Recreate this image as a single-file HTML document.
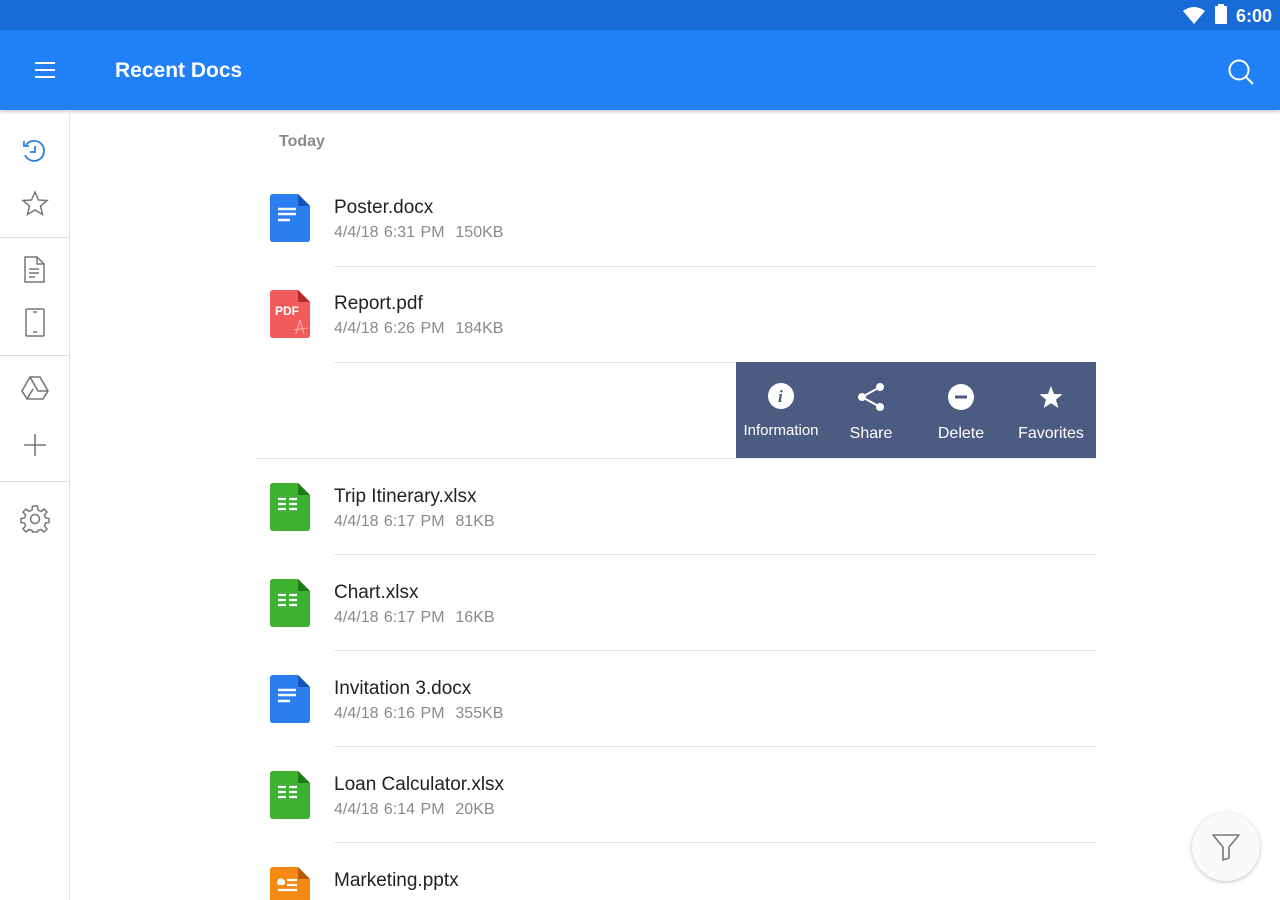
<!DOCTYPE html>
<html><head><meta charset="utf-8"><style>
*{margin:0;padding:0;box-sizing:border-box}
html,body{width:1280px;height:900px;overflow:hidden}
body{background:#fff;font-family:"Liberation Sans",sans-serif;position:relative}
.abs{position:absolute}
.name{position:absolute;left:334px;font-size:19px;color:#222}
.meta{position:absolute;left:334px;font-size:16px;color:#8a8a8a;word-spacing:1px}
.sep{position:absolute;left:334px;width:762px;height:1px;background:#e8e8e8}
.act{position:absolute;top:362px;width:90px;height:96px;color:#fff;text-align:center}
.act span{position:absolute;left:0;right:0;top:60px;font-size:16px}
</style></head><body>
<div class="abs" style="left:0;top:0;width:1280px;height:30px;background:#176bd6"></div>
<svg class="abs" style="left:1183px;top:6px" width="22" height="18" viewBox="0 0 22 18"><path d="M0 5 Q11 -3 22 5 L11 18 Z" fill="#fff"/></svg>
<div class="abs" style="left:1215px;top:6px;width:12px;height:18px;background:#fff;border-radius:1px"></div>
<div class="abs" style="left:1218px;top:4px;width:6px;height:3px;background:#fff"></div>
<div class="abs" style="left:1236px;top:6px;color:#fff;font-size:18px;font-weight:bold">6:00</div>
<div class="abs" style="left:0;top:30px;width:1280px;height:80px;background:#1f80f8;box-shadow:0 2px 3px rgba(0,0,0,.2)"></div>
<svg class="abs" style="left:34px;top:61px" width="22" height="18"><path d="M1 2H21M1 9H21M1 16H21" stroke="#fff" stroke-width="2"/></svg>
<div class="abs" style="left:115px;top:59px;color:#fff;font-size:21px;font-weight:bold">Recent Docs</div>
<svg class="abs" style="left:1226px;top:57px" width="30" height="30"><circle cx="13" cy="13" r="9.5" fill="none" stroke="#fff" stroke-width="2"/><path d="M20 20L27 27" stroke="#fff" stroke-width="2.2"/></svg>
<div class="abs" style="left:69px;top:110px;width:1px;height:790px;background:#e4e4e4"></div>
<div class="abs" style="left:0;top:237px;width:69px;height:1px;background:#ddd"></div>
<div class="abs" style="left:0;top:355px;width:69px;height:1px;background:#ddd"></div>
<div class="abs" style="left:0;top:481px;width:69px;height:1px;background:#ddd"></div>
<svg class="abs" style="left:20px;top:137px" width="30" height="30" fill="none" stroke-width="1.8"><path d="M6 8 A10 10 0 1 1 5 18" stroke="#2d7fe0"/><path d="M4 4V9H9" stroke="#2d7fe0"/><path d="M15 9V15H10" stroke="#2d7fe0"/></svg>
<svg class="abs" style="left:20px;top:189px" width="30" height="30" fill="none" stroke="#777" stroke-width="1.5"><path d="M15 3L18.5 11 27 11.5 20.5 17 22.5 25.5 15 21 7.5 25.5 9.5 17 3 11.5 11.5 11Z"/></svg>
<svg class="abs" style="left:22px;top:255px" width="26" height="30" fill="none" stroke="#777" stroke-width="1.5"><path d="M3 2H15L22 9V27H3Z M15 2V9H22 M7 14H17M7 18H17M7 22H13"/></svg>
<svg class="abs" style="left:24px;top:308px" width="24" height="30" fill="none" stroke="#777" stroke-width="1.5"><rect x="2" y="1" width="18" height="27" rx="1"/><path d="M9 4H13M9 24H13"/></svg>
<svg class="abs" style="left:20px;top:374px" width="30" height="28" fill="none" stroke="#777" stroke-width="1.6"><path d="M10 3H20L28 17 23 25H7L2 17Z M10 3L18 17H28 M7 25L13 15 M2 17L10 3"/></svg>
<svg class="abs" style="left:22px;top:432px" width="26" height="26" stroke="#777" stroke-width="1.6"><path d="M13 2V24M2 13H24"/></svg>
<svg class="abs" style="left:20px;top:503px" width="30" height="30" fill="none" stroke="#777" stroke-width="1.5"><path d="M12.5 3H17.5L18 7 21 8.5 24 6 27 9 24.5 12 25.5 15 29 15.5V18.5 M12.5 3L12 7 9 8.5 6 6 3 9 5.5 12 4.5 15 1 15.5V19.5L4.5 20 5.5 23 3 26 6 29 9 26.5 12 27.5 12.5 29H17.5L18 27.5 21 26.5 24 29 27 26 24.5 23 25.5 20 29 19.5V15.5"/><circle cx="15" cy="16" r="4.5"/></svg>
<div class="abs" style="left:279px;top:133px;font-size:16px;font-weight:bold;color:#8a8a8a">Today</div>

<svg class="abs" style="left:270px;top:194px" width="40" height="48"><path d="M3 0H28L40 12V45Q40 48 37 48H3Q0 48 0 45V3Q0 0 3 0Z" fill="#2a7ef0"/><path d="M28 0L40 12H28Z" fill="#1552b8"/><path d="M8 15H26M8 20H26M8 26H20" stroke="#fff" stroke-width="2.4"/></svg>
<div class="name" style="top:197px">Poster.docx</div><div class="meta" style="top:224px">4/4/18 6:31 PM &nbsp;150KB</div>
<div class="sep" style="top:266px"></div>
<svg class="abs" style="left:270px;top:290px" width="40" height="48"><path d="M3 0H28L40 12V45Q40 48 37 48H3Q0 48 0 45V3Q0 0 3 0Z" fill="#f25b5b"/><path d="M28 0L40 12H28Z" fill="#b52a2a"/><text x="5" y="25" fill="#fff" font-size="12" font-weight="bold" font-family="Liberation Sans">PDF</text><path d="M30 30L26 44M30 30L34 44M24 40L38 38" stroke="#ffb0b0" stroke-width="1" fill="none"/></svg>
<div class="name" style="top:293px">Report.pdf</div><div class="meta" style="top:320px">4/4/18 6:26 PM &nbsp;184KB</div>
<div class="sep" style="top:362px"></div>
<div class="abs" style="left:736px;top:362px;width:360px;height:96px;background:#4b5b81"></div>
<div class="act" style="left:736px"><svg class="abs" style="left:32px;top:21px" width="26" height="26"><circle cx="13" cy="13" r="13" fill="#fff"/><text x="10" y="19" fill="#4b5b81" font-size="17" font-weight="bold" font-style="italic" font-family="Liberation Serif">i</text></svg><span style="font-size:15px;top:60px">Information</span></div>
<div class="act" style="left:826px"><svg class="abs" style="left:30px;top:20px" width="30" height="30" fill="#fff"><circle cx="24" cy="5" r="4"/><circle cx="6" cy="15" r="4"/><circle cx="24" cy="25" r="4"/><path d="M24 5L6 15 24 25" stroke="#fff" stroke-width="2" fill="none"/></svg><span style="top:63px">Share</span></div>
<div class="act" style="left:916px"><svg class="abs" style="left:32px;top:22px" width="26" height="26"><circle cx="13" cy="13" r="13" fill="#fff"/><path d="M7 13H19" stroke="#4b5b81" stroke-width="3"/></svg><span style="top:63px">Delete</span></div>
<div class="act" style="left:1006px"><svg class="abs" style="left:33px;top:23px" width="24" height="24" fill="#fff"><path d="M12 1L15 9 23.5 9.3 17 14.6 19.3 23 12 18.2 4.7 23 7 14.6 0.5 9.3 9 9Z"/></svg><span style="top:63px">Favorites</span></div>
<div class="abs" style="left:256px;top:458px;width:840px;height:1px;background:#e8e8e8"></div>

<svg class="abs" style="left:270px;top:483px" width="40" height="48"><path d="M3 0H28L40 12V45Q40 48 37 48H3Q0 48 0 45V3Q0 0 3 0Z" fill="#3fb130"/><path d="M28 0L40 12H28Z" fill="#1f7a17"/><path d="M8 16H16M19 16H27M8 21H16M19 21H27M8 26H16M19 26H27" stroke="#fff" stroke-width="2.2"/></svg>
<div class="name" style="top:486px">Trip Itinerary.xlsx</div><div class="meta" style="top:513px">4/4/18 6:17 PM &nbsp;81KB</div>
<div class="sep" style="top:554px"></div>
<svg class="abs" style="left:270px;top:579px" width="40" height="48"><path d="M3 0H28L40 12V45Q40 48 37 48H3Q0 48 0 45V3Q0 0 3 0Z" fill="#3fb130"/><path d="M28 0L40 12H28Z" fill="#1f7a17"/><path d="M8 16H16M19 16H27M8 21H16M19 21H27M8 26H16M19 26H27" stroke="#fff" stroke-width="2.2"/></svg>
<div class="name" style="top:582px">Chart.xlsx</div><div class="meta" style="top:609px">4/4/18 6:17 PM &nbsp;16KB</div>
<div class="sep" style="top:650px"></div>
<svg class="abs" style="left:270px;top:675px" width="40" height="48"><path d="M3 0H28L40 12V45Q40 48 37 48H3Q0 48 0 45V3Q0 0 3 0Z" fill="#2a7ef0"/><path d="M28 0L40 12H28Z" fill="#1552b8"/><path d="M8 15H26M8 20H26M8 26H20" stroke="#fff" stroke-width="2.4"/></svg>
<div class="name" style="top:678px">Invitation 3.docx</div><div class="meta" style="top:705px">4/4/18 6:16 PM &nbsp;355KB</div>
<div class="sep" style="top:746px"></div>
<svg class="abs" style="left:270px;top:771px" width="40" height="48"><path d="M3 0H28L40 12V45Q40 48 37 48H3Q0 48 0 45V3Q0 0 3 0Z" fill="#3fb130"/><path d="M28 0L40 12H28Z" fill="#1f7a17"/><path d="M8 16H16M19 16H27M8 21H16M19 21H27M8 26H16M19 26H27" stroke="#fff" stroke-width="2.2"/></svg>
<div class="name" style="top:774px">Loan Calculator.xlsx</div><div class="meta" style="top:801px">4/4/18 6:14 PM &nbsp;20KB</div>
<div class="sep" style="top:842px"></div>
<svg class="abs" style="left:270px;top:867px" width="40" height="33"><path d="M3 0H28L40 12V45Q40 48 37 48H3Q0 48 0 45V3Q0 0 3 0Z" fill="#f58a12"/><path d="M28 0L40 12H28Z" fill="#b85a00"/><path d="M8 18A4 4 0 1 1 14 18Z" fill="#fff"/><path d="M17 13H27M17 18H27M8 23H27" stroke="#fff" stroke-width="2.2"/></svg>
<div class="name" style="top:870px">Marketing.pptx</div>

<div class="abs" style="left:1192px;top:813px;width:68px;height:68px;border-radius:50%;background:#fafafa;box-shadow:0 1px 4px rgba(0,0,0,.25)"></div>
<svg class="abs" style="left:1211px;top:832px" width="30" height="30" fill="none" stroke="#777" stroke-width="1.6" stroke-linejoin="round"><path d="M2 3H28L18 15V26L12 28V15Z"/></svg>
</body></html>
